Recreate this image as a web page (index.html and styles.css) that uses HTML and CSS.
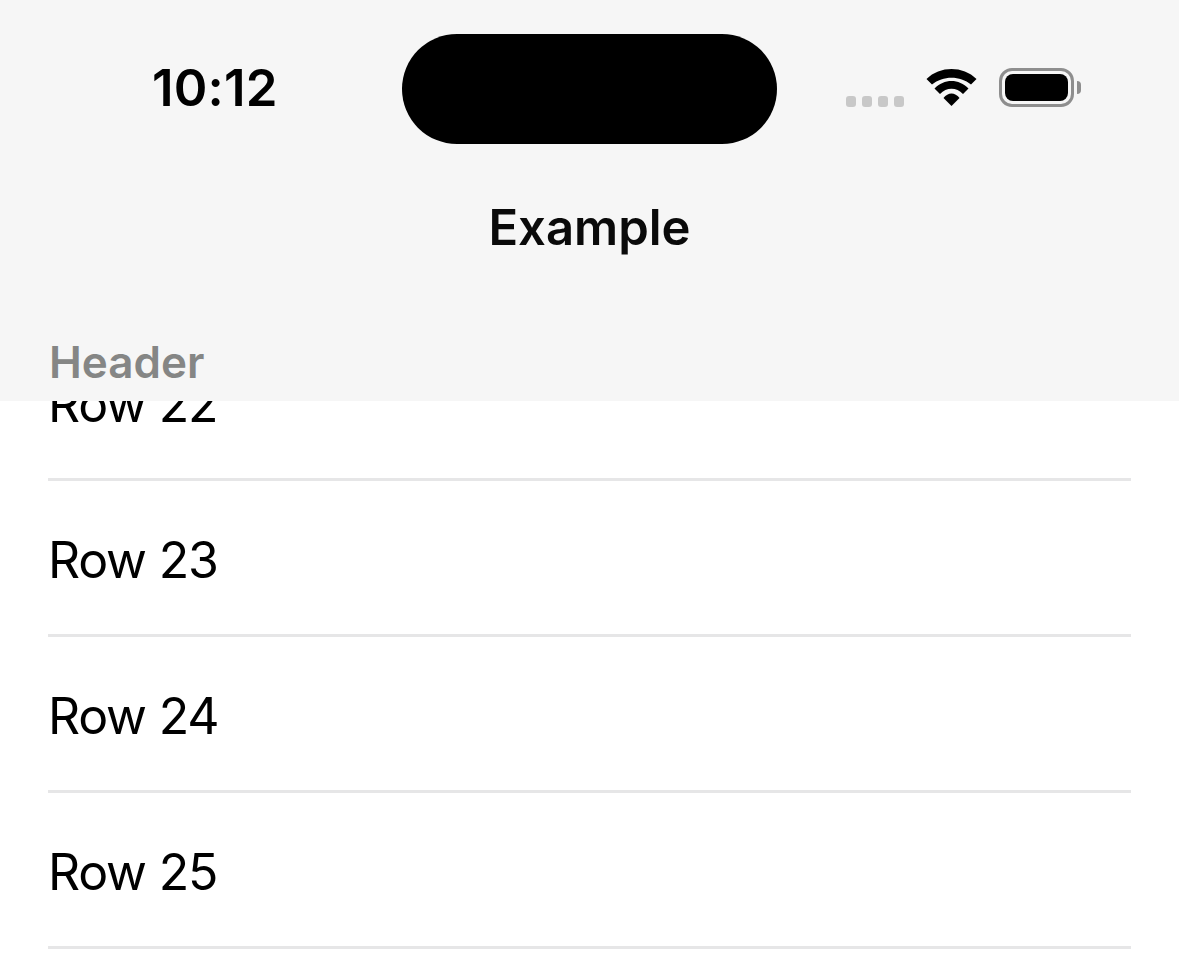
FILE: index.html
```html
<!DOCTYPE html>
<html lang="en">
<head>
<meta charset="utf-8">
<title>Example</title>
<link rel="stylesheet" href="styles.css">
</head>
<body>
<div class="screen">
  <header class="top">
    <div class="status">
      <span class="time">10:12</span>
      <div class="island"></div>
      <div class="indicators">
        <div class="signal"><i></i><i></i><i></i><i></i></div>
        <svg class="wifi" width="52" height="38" viewBox="0 0 52 38">
          <path d="M0.500 10 C14 -3.300 37 -3.300 50.500 10 L45 15.500 C34 6.500 17 6.500 6 15.500 Z" fill="#000"/>
          <path d="M8.500 19.500 C18 9.500 33 9.500 42.500 19.500 L37 25 C30.500 18 20.500 18 14 25 Z" fill="#000"/>
          <path d="M17.500 29 C22 23 29 23 33.500 29 L25.500 37 Z" fill="#000"/>
        </svg>
        <div class="battery"><div class="battery-level"></div></div>
        <div class="battery-cap"></div>
      </div>
    </div>
    <div class="title">Example</div>
    <div class="section">Header</div>
  </header>
  <main class="list">
    <div class="row">Row 22</div>
    <div class="row">Row 23</div>
    <div class="row">Row 24</div>
    <div class="row">Row 25</div>
  </main>
</div>
</body>
</html>
```
FILE: styles.css
```css
* { box-sizing: border-box; }
html, body { margin: 0; padding: 0; background: #fff; }
.screen {
  position: relative;
  width: 1179px;
  height: 954px;
  overflow: hidden;
  font-family: Inter, "Liberation Sans", sans-serif;
  color: #000;
}
.top {
  position: absolute;
  top: 0; left: 0; right: 0;
  z-index: 2;
  height: 401px;
  background: #f6f6f6;
  display: flex;
  flex-direction: column;
}
.status {
  display: flex;
  align-items: flex-start;
  height: 144px;
  padding-top: 34px;
}
.time {
  width: 402px;
  padding: 24px 0 0 152px;
  font-size: 51px;
  line-height: 60px;
  font-weight: 600;
  letter-spacing: 0.2px;
}
.island {
  width: 375px;
  height: 110px;
  border-radius: 55px;
  background: #000;
}
.indicators {
  display: flex;
  align-items: flex-start;
  padding-left: 69px;
}
.signal {
  display: flex;
  gap: 6px;
  margin-top: 62px;
}
.signal i {
  width: 10px;
  height: 11px;
  border-radius: 3px;
  background: #c8c8c8;
}
.wifi { margin: 35px 0 0 22px; }
.battery {
  margin: 34px 0 0 21px;
  width: 75px;
  height: 39px;
  border: 3px solid #8e8e8e;
  border-radius: 13px;
  padding: 3px;
}
.battery-level {
  width: 100%;
  height: 100%;
  background: #000;
  border-radius: 8px;
}
.battery-cap {
  margin: 47px 0 0 3px;
  width: 4px;
  height: 13px;
  background: #8e8e8e;
  border-radius: 0 6px 6px 0;
}
.title {
  margin-top: 56px;
  text-align: center;
  font-size: 49px;
  line-height: 56px;
  font-weight: 600;
  color: #0a0a0a;
}
.section {
  margin-top: 81px;
  padding-left: 49px;
  font-size: 44px;
  line-height: 50px;
  font-weight: 600;
  color: #858685;
}
.list {
  padding: 325px 48px 0;
}
.row {
  height: 156px;
  border-bottom: 3px solid #e6e6e7;
  display: flex;
  align-items: center;
  padding: 4px 0 0 0;
  font-size: 50px;
  line-height: 58px;
  letter-spacing: -1.2px;
}
```
